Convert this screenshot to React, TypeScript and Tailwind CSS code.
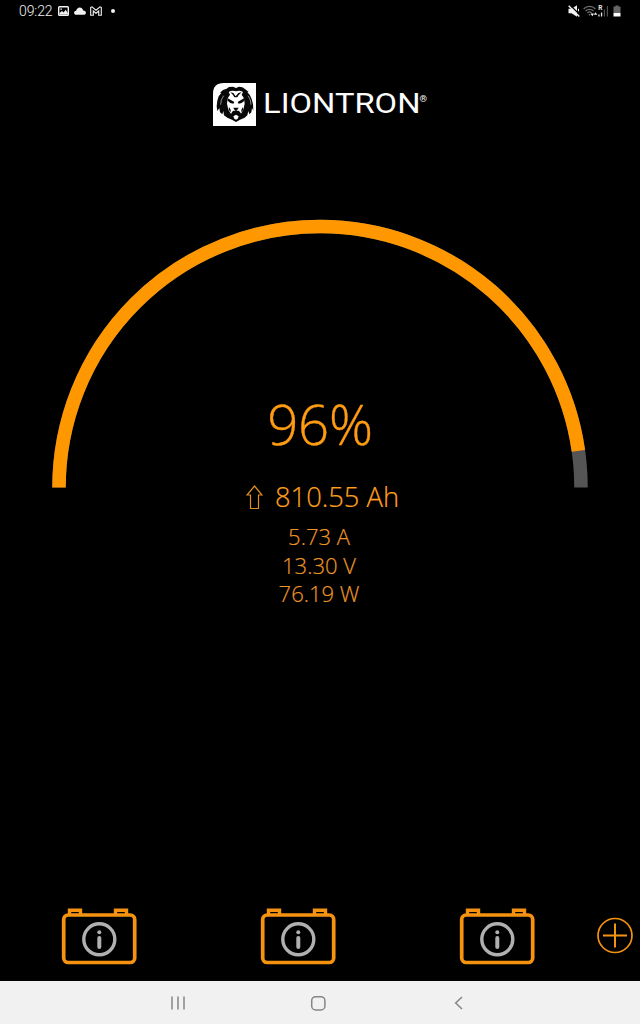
import type { ReactNode } from 'react';

const CHARGE = 96;
const READINGS = ['5.73 A', '13.30 V', '76.19 W'];
const BATTERIES = [1, 2, 3];

const StatusBar = () => (
  <div className="h-[22px] shrink-0 flex items-center justify-between pl-[19px] pr-[19px] text-[#f2f2f2]">
    <div className="flex items-center">
      <span className="w-[34px] font-[Roboto,sans-serif] text-[14px] leading-[22px] tracking-[-0.1px]">09:22</span>
      <svg className="ml-[5px]" width="11" height="10" viewBox="0 0 11 10">
        <rect x="0.7" y="0.7" width="9.6" height="8.6" rx="0.8" fill="none" stroke="currentColor" strokeWidth="1.4" />
        <path d="M1.500 8.500V7L4 5l1.700 1.600L7.600 3.700 9.800 7v1.500Z" fill="currentColor" />
        <rect x="2.4" y="2.4" width="1.4" height="1.4" fill="currentColor" />
      </svg>
      <svg className="ml-[5px]" width="12" height="8" viewBox="0 0 12 8">
        <path d="M2.500 7.800C.9 7.800.1 6.900.1 5.700s.8-1.900 2-2C2.600 1.800 4 .5 5.700.5c1.700 0 3 1.200 3.500 3 1.700.1 2.700.9 2.700 2.200 0 1.300-.9 2.100-2.300 2.100Z" fill="currentColor" />
      </svg>
      <svg className="ml-[4px]" width="12" height="10" viewBox="0 0 12 10">
        <path d="M.7 9.200V1.400L2 .8l4 3.400L10 .8l1.300.6v7.800H8.700V5L6 7.200 3.300 5v4.200Z" fill="none" stroke="currentColor" strokeWidth="1.100" />
      </svg>
      <span className="ml-[9px] size-[4px] rounded-full bg-[#f2f2f2]" />
    </div>
    <div className="flex items-center">
      <svg width="12" height="12" viewBox="0 0 12 12">
        <path d="M.5 3.800h3L9 .3v11.400L3.500 8.200h-3Z" fill="currentColor" />
        <path d="M2 0l10.500 10.500" stroke="#000" strokeWidth="1.300" />
        <path d="M.7.800 11.300 11.400" stroke="currentColor" strokeWidth="1.400" />
        <path d="M10.500 3.800v2.500" stroke="currentColor" />
      </svg>
      <svg className="ml-[3px]" width="15" height="12" viewBox="0 0 15 12" fill="none">
        <path d="M.6 4C3.800.6 9.200.6 12.400 4M2.500 6c2.200-2.200 5.800-2.200 8 0M4.400 8c1.200-1.200 3-1.200 4.200 0" stroke="#707070" strokeWidth="1.200" />
        <path d="M5.500 9.200h2l-1 1.500Z" fill="#999" />
        <path d="m7.500 8.600 1.800 2.600 1.700-2.600ZM10.800 9.800l1.700-2.600 1.800 2.600Z" fill="currentColor" />
      </svg>
      <svg className="opacity-95" width="11" height="12" viewBox="0 0 11 12">
        <text x="0.200" y="5.300" fill="currentColor" fontSize="6.500" fontWeight="700" fontFamily="Roboto, sans-serif">R</text>
        <path d="M.3 9.500h1.300v2H.3ZM2.900 7.500h1.300v4H2.900Z" fill="currentColor" />
        <path d="M5.800 4.500h1.200v7H5.800ZM8.800 1h1.200v10.500H8.800Z" fill="#555" />
      </svg>
      <svg className="ml-[4px]" width="8" height="12" viewBox="0 0 8 12">
        <path d="M2.500.5h3v1H7.500v7H.5v-7h2Z" fill="#666" />
        <path d="M.5 8h7v3.500h-7Z" fill="#fff" />
      </svg>
    </div>
  </div>
);

const LionMark = () => (
  <svg width="43" height="43" viewBox="0 0 129 129">
    <path d="M32 0h97v129H0V32Q0 0 32 0Z" fill="#fff" />
    {/* грива */}
    <path
      d="M69 15 60 11 48 12 41 17 30 21 21 29 25 30 17 40 13 53 11 70 13 84 19 75 21 88 28 94 31 84 33 97 43 104 57 110 69 117 81 110 95 104 103 97 106 84 109 94 115 88 117 75 121 83 120 64 116 48 110 35 103 28 107 27 97 19 88 13 78 11Z"
      fill="#080808"
    />
    {/* морда */}
    <path
      d="M47 27Q58 20 69 25Q80 20 90 27L86 35 93 46 95 62 91 80 84 92 81 87 77 83 61 83 57 87 54 93 46 80 42 62 44 46 51 35Z"
      fill="#fff"
    />
    {/* лоб, глаза, нос */}
    <path
      d="m52 28 9 2 7 10 8-10 10-2-9 8-4 7h-9l-4-7ZM43 45 64 57 61 62 52 60 44 53ZM94 45 74 57l3 5 9-2 8-7ZM61 74h16l-4 6-4 3-5-3ZM67 80h4v7l9 4-3 4-8-4-8 4-3-4 9-4ZM48 72l5 8v8l-6-8ZM90 72l-5 8v8l6-8Z"
      fill="#080808"
    />
    <path d="m61 100 8-5 8 5-3 7-5 3-5-3Z" fill="#fff" />
    <path d="m32 38-7 13-2 14M105 38l7 13 2 14" stroke="#fff" strokeWidth="1.600" fill="none" />
  </svg>
);

const Logo = () => (
  <div className="mt-[61px] ml-[213px] h-[43px] flex items-start">
    <LionMark />
    <svg className="opacity-99" width="174" height="43" viewBox="0 0 174 43" fill="#fff" fontFamily="Roboto, sans-serif">
      <text x="7" y="30.300" fontSize="27" fontWeight="400" textLength="157.500" lengthAdjust="spacingAndGlyphs">
        LIONTRON
      </text>
      <text x="163.500" y="18.500" fontSize="9.500" fontWeight="400">®</text>
    </svg>
  </div>
);

const Gauge = ({ value, children }: { value: number; children: ReactNode }) => {
  const filled = value - 0.5;
  const arc = 'M59 268.500A261 261 0 0 1 581 268.500';

  return (
    <div className="mt-[93px] grid justify-items-center">
      <svg className="col-start-1 row-start-1" width="640" height="269" viewBox="0 0 640 269" fill="none" strokeWidth="13.500">
        <path d={arc} stroke="#555" pathLength={100} />
        <path d={arc} stroke="#ff9800" pathLength={100} strokeDasharray={`${filled} 100`} />
      </svg>
      <div className="col-start-1 row-start-1 pt-[173px]">{children}</div>
    </div>
  );
};

const Battery = () => (
  <svg width="76" height="58" viewBox="0 0 76 58" fill="none">
    <g stroke="#f59311">
      <path d="M8.500 6V2.300h11V6M54.500 6V2.300h11V6" strokeWidth="3.400" />
      <rect x="2.700" y="7" width="71" height="47.500" rx="4.500" strokeWidth="3.700" />
    </g>
    <circle cx="38.300" cy="31.300" r="15.500" stroke="#b0b0b0" strokeWidth="3.400" />
    <circle cx="38.300" cy="24.300" r="2" fill="#b0b0b0" />
    <path d="M38.300 30v9" stroke="#b0b0b0" strokeWidth="4" strokeLinecap="round" />
  </svg>
);

const NavBar = () => (
  <div className="h-[43px] shrink-0 bg-[#f1f1f1] flex items-center pl-[170px] text-[#858585]">
    <svg width="16" height="16" viewBox="0 0 16 16" stroke="currentColor" strokeWidth="1.500">
      <path d="M2 1.500v13M8 1.500v13M14 1.500v13" />
    </svg>
    <svg className="ml-[124px]" width="16" height="16" viewBox="0 0 16 16" fill="none" stroke="currentColor" strokeWidth="1.500">
      <rect x="1.700" y="1.700" width="13.200" height="13.200" rx="4" />
    </svg>
    <svg className="ml-[125px]" width="16" height="16" viewBox="0 0 16 16" fill="none" stroke="currentColor" strokeWidth="1.500">
      <path d="M11 2 4.700 8l6.300 6" />
    </svg>
  </div>
);

export default function App() {
  return (
    <div className="w-[640px] h-[1024px] bg-black flex flex-col overflow-hidden font-['Open_Sans',sans-serif] font-light text-[#ff9f1f]">
      <StatusBar />
      <Logo />

      <Gauge value={CHARGE}>
        <p className="text-[54.5px] leading-[64px] tracking-[-0.2px] text-[#ff9c12] [-webkit-text-stroke:0.4px]">{CHARGE}%</p>
      </Gauge>

      <div className="mt-[-9px] ml-[246px] h-[36px] flex items-center">
        <svg width="17" height="25" viewBox="0 0 17 25" fill="none" stroke="#e08e24" strokeWidth="1.200">
          <path d="M8.500 1 16 10h-3.500v13.500h-8V10H1Z" />
        </svg>
        <span className="ml-[12px] text-[27.3px] leading-[36px] whitespace-nowrap [-webkit-text-stroke:0.2px]">810.55 Ah</span>
      </div>

      <div className="mt-[7px] mr-[2px] text-center text-[22px] leading-[28.7px] text-[#eb9528] [-webkit-text-stroke:0.2px]">
        {READINGS.map(reading => (
          <p key={reading}>{reading}</p>
        ))}
      </div>

      <div className="mt-auto mb-[15px] pl-[61px] pr-[6px] h-[58px] flex items-center">
        <div className="flex gap-[123px]">
          {BATTERIES.map(id => (
            <Battery key={id} />
          ))}
        </div>
        <svg className="ml-auto mb-[3px]" width="37" height="37" viewBox="0 0 37 37" fill="none" stroke="#f59311">
          <circle cx="18" cy="18.500" r="17" strokeWidth="1.700" />
          <path d="M18 6.500v24M6 18.500h24" strokeWidth="2" />
        </svg>
      </div>

      <NavBar />
    </div>
  );
}
